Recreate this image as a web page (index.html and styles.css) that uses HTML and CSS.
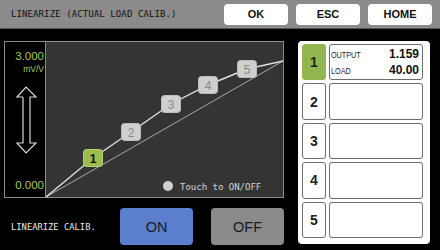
FILE: index.html
```html
<!DOCTYPE html>
<html>
<head>
<meta charset="utf-8">
<link rel="stylesheet" href="styles.css">
</head>
<body>
<div class="screen">
  <header class="topbar">
    <div class="title">LINEARIZE (ACTUAL LOAD CALIB.)</div>
    <div class="topbtns">
      <div class="tbtn">OK</div>
      <div class="tbtn">ESC</div>
      <div class="tbtn">HOME</div>
    </div>
  </header>
  <main class="main">
    <section class="leftcol">
      <div class="chart">
        <div class="axis">
          <div class="ymax">3.000</div>
          <div class="unit">mV/V</div>
          <svg class="arrow" width="40" height="68" viewBox="0 0 40 68">
            <polyline points="18,11 12,11 21,1 31,11 25,11 25,57 31,57 21,67 12,57 18,57 18,11" fill="none" stroke="#d8d8d8" stroke-width="1.2"/>
          </svg>
          <div class="ymin">0.000</div>
        </div>
        <div class="plot">
          <svg class="plotsvg" width="237" height="155" viewBox="0 0 237 155">
            <line x1="0" y1="155" x2="237" y2="19" stroke="#a8a8a8" stroke-width="1"/>
            <polyline points="0,155 47,116 85,90 125,62 162,43 201,27 237,19" fill="none" stroke="#e0e0e0" stroke-width="1.4"/>
            <g class="pt on">
              <rect x="37.5" y="107.5" width="19" height="17" rx="3"/>
              <text x="47" y="121">1</text>
            </g>
            <g class="pt">
              <rect x="75.5" y="81.5" width="19" height="17" rx="3"/>
              <text x="85" y="95">2</text>
            </g>
            <g class="pt">
              <rect x="115.5" y="53.5" width="19" height="17" rx="3"/>
              <text x="125" y="67">3</text>
            </g>
            <g class="pt">
              <rect x="152.5" y="34.5" width="19" height="17" rx="3"/>
              <text x="162" y="48">4</text>
            </g>
            <g class="pt">
              <rect x="191.5" y="18.5" width="19" height="17" rx="3"/>
              <text x="201" y="32">5</text>
            </g>
            <circle cx="122" cy="144" r="5" fill="#d0d0d0"/>
            <text class="legend" x="134" y="147.5">Touch to ON/OFF</text>
          </svg>
        </div>
      </div>
      <div class="bottomrow">
        <div class="blabel">LINEARIZE CALIB.</div>
        <div class="bbtn onbtn">ON</div>
        <div class="bbtn offbtn">OFF</div>
      </div>
    </section>
    <aside class="panel">
      <div class="row">
        <div class="num active">1</div>
        <div class="data">
          <div class="line"><span class="lbl">OUTPUT</span><span class="val">1.159</span></div>
          <div class="line"><span class="lbl">LOAD</span><span class="val">40.00</span></div>
        </div>
      </div>
      <div class="row"><div class="num">2</div><div class="data"></div></div>
      <div class="row"><div class="num">3</div><div class="data"></div></div>
      <div class="row"><div class="num">4</div><div class="data"></div></div>
      <div class="row"><div class="num">5</div><div class="data"></div></div>
    </aside>
  </main>
</div>
</body>
</html>
```

FILE: styles.css
```css
* { box-sizing: border-box; }
html, body { margin: 0; padding: 0; background: #000; }
.screen {
  width: 440px;
  height: 250px;
  background: #000;
  overflow: hidden;
  font-family: "Liberation Sans", Arial, sans-serif;
}
.topbar {
  height: 29px;
  background: #8b8b8b;
  display: flex;
  align-items: center;
  padding: 0 8px 0 11px;
  border-bottom: 1px solid #555;
}
.title {
  font-family: "DejaVu Sans Mono", monospace;
  font-size: 9px;
  color: #111;
  letter-spacing: 0.1px;
}
.topbtns {
  margin-left: auto;
  display: flex;
  gap: 8px;
}
.tbtn {
  width: 64px;
  height: 21px;
  background: #fff;
  border-radius: 4px;
  display: flex;
  align-items: center;
  justify-content: center;
  font-size: 11px;
  font-weight: bold;
  color: #111;
}
.main {
  display: flex;
  padding: 12px 10px 0 4px;
}
.leftcol {
  width: 280px;
  display: flex;
  flex-direction: column;
}
.chart {
  height: 157px;
  border: 1px solid #8c8c8c;
  display: flex;
}
.axis {
  width: 41px;
  border-right: 1px solid #8c8c8c;
  background: #000;
  display: flex;
  flex-direction: column;
  align-items: flex-end;
  padding-right: 1px;
}
.ymax {
  margin-top: 8px;
  color: #a9c85c;
  font-size: 11.5px;
  line-height: 12px;
}
.unit {
  margin-top: 3px;
  color: #a9c85c;
  font-size: 8.5px;
  line-height: 9px;
}
.arrow {
  margin-top: 12px;
  align-self: flex-start;
  margin-left: 0;
}
.ymin {
  margin-top: auto;
  margin-bottom: 6px;
  color: #a9c85c;
  font-size: 11.5px;
  line-height: 12px;
}
.plot {
  flex: 1;
  background: #343434;
  position: relative;
}
.plotsvg {
  position: absolute;
  left: 0;
  top: 0;
  overflow: visible;
}
.pt rect { fill: #cfcfcf; stroke: #bdbdbd; stroke-width: 1; }
.pt text {
  fill: #8a8a8a;
  font-family: "Liberation Sans", Arial, sans-serif;
  font-size: 12px;
  text-anchor: middle;
}
.pt.on rect { fill: #9bbd4e; stroke: #b7d36a; }
.pt.on text { fill: #111; font-weight: bold; }
.legend {
  fill: #d4d4d4;
  font-family: "DejaVu Sans Mono", monospace;
  font-size: 9px;
}
.bottomrow {
  display: flex;
  align-items: center;
  padding-top: 10px;
}
.blabel {
  width: 116px;
  padding-left: 7px;
  font-family: "DejaVu Sans Mono", monospace;
  font-size: 8.8px;
  color: #e8e8e8;
}
.bbtn {
  width: 73px;
  height: 37px;
  border-radius: 4px;
  display: flex;
  align-items: center;
  justify-content: center;
  font-size: 14.5px;
  color: #1a1a1a;
}
.onbtn { background: #5b7ecd; }
.offbtn { background: #8a8a8a; margin-left: 18px; }
.panel {
  margin-left: 14px;
  width: 132px;
  height: 203px;
  background: #fff;
  border-radius: 4px;
  padding: 3px 7px 6px 4px;
  display: flex;
  flex-direction: column;
  gap: 3px;
}
.row {
  flex: 1;
  display: flex;
  gap: 3px;
}
.num {
  width: 24px;
  border: 1.5px solid #6e6e6e;
  border-radius: 3px;
  display: flex;
  align-items: center;
  justify-content: center;
  font-size: 14px;
  font-weight: bold;
  color: #222;
}
.num.active {
  background: #92b64e;
  border-color: #92b64e;
}
.data {
  flex: 1;
  border: 1.5px solid #6e6e6e;
  border-radius: 3px;
  display: flex;
  flex-direction: column;
  justify-content: space-around;
  padding: 1px 3px 1px 1px;
}
.line {
  display: flex;
  align-items: baseline;
  justify-content: space-between;
}
.lbl {
  font-size: 8.5px;
  color: #222;
  transform: scaleX(0.85);
  transform-origin: left center;
}
.val {
  font-size: 12px;
  font-weight: bold;
  color: #111;
}
```
